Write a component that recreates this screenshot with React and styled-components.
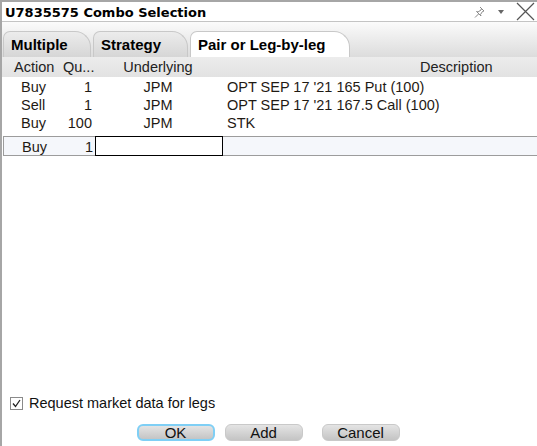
import React from "react";
import styled, { createGlobalStyle } from "styled-components";

const Global = createGlobalStyle`
  html, body { margin: 0; padding: 0; background: #fff; }
  body { font-family: "Liberation Sans", Arial, sans-serif; }
`;

const Window = styled.div`
  width: 537px;
  height: 446px;
  box-sizing: border-box;
  border-top: 2px solid #a6a6a6;
  border-left: 2px solid #a6a6a6;
  display: flex;
  flex-direction: column;
  overflow: hidden;
  background: #fff;
`;

const TitleBar = styled.div`
  height: 19px;
  display: flex;
  align-items: center;
  padding-left: 3px;
  border-bottom: 1px solid #c4c4c4;
`;

const Title = styled.div`
  flex: 1;
  font-family: "DejaVu Sans", Verdana, sans-serif;
  font-weight: bold;
  font-size: 13px;
  color: #000;
  padding-top: 1px;
`;

const TitleIcons = styled.div`
  display: flex;
  align-items: center;
  gap: 12px;
  padding-right: 2px;
`;

const TabStrip = styled.div`
  height: 35px;
  background: linear-gradient(#fbfbfb, #dcdcdc);
  display: flex;
  align-items: flex-end;
  padding-left: 1px;
  gap: 2px;
`;

const Tab = styled.div`
  height: 26px;
  box-sizing: border-box;
  width: ${(p) => p.w}px;
  padding-left: 7px;
  display: flex;
  align-items: center;
  font-weight: bold;
  font-size: 15px;
  color: #000;
  border: 1px solid #c8c8c8;
  border-bottom: none;
  border-radius: 7px 16px 0 0;
  background: ${(p) => (p.active ? "#fff" : "linear-gradient(#ececec, #d6d6d6)")};
`;

const Grid = styled.div`
  display: grid;
  grid-template-columns: 49px 43px 128px 1fr;
  align-items: center;
`;

const Header = styled(Grid)`
  height: 20px;
  background: linear-gradient(#ececec, #e2e2e2);
  font-size: 14.5px;
  color: #222;
`;

const HCell = styled.div`
  padding-left: ${(p) => p.pl || 0}px;
  text-align: ${(p) => p.align || "left"};
  white-space: nowrap;
`;

const Body = styled.div`
  flex: 1;
  padding-top: 1px;
`;

const Row = styled(Grid)`
  height: 18px;
  font-size: 14.5px;
  color: #1f1a14;
`;

const EditRow = styled(Grid)`
  height: 20px;
  margin-top: 4px;
  margin-left: 1px;
  box-sizing: border-box;
  border-top: 1px solid #9c9c9c;
  border-bottom: 1px solid #9c9c9c;
  border-left: 1px solid #9c9c9c;
  background: #f5f7fb;
  font-size: 14.5px;
  color: #1f1a14;
  grid-template-columns: 48px 43px 128px 1fr;
`;

const Cell = styled.div`
  padding-left: ${(p) => p.pl || 0}px;
  padding-right: ${(p) => p.pr || 0}px;
  text-align: ${(p) => p.align || "left"};
  white-space: nowrap;
`;

const EditBox = styled.div`
  height: 20px;
  margin-top: -1px;
  box-sizing: border-box;
  border: 1px solid #000;
  background: #fff;
`;

const Footer = styled.div`
  height: 58px;
  display: flex;
  flex-direction: column;
`;

const CheckLine = styled.label`
  display: flex;
  align-items: center;
  gap: 6px;
  padding-left: 8px;
  height: 22px;
  margin-top: 4px;
  font-size: 14.5px;
  color: #111;
`;

const Box = styled.span`
  width: 11px;
  height: 11px;
  border: 1px solid #8a8a8a;
  display: flex;
  align-items: center;
  justify-content: center;
  background: #fff;
`;

const Buttons = styled.div`
  display: flex;
  justify-content: center;
  margin-top: 10px;
  padding-right: 3px;
`;

const Button = styled.button`
  width: ${(p) => p.w || 78}px;
  height: 17px;
  margin-left: ${(p) => p.ml || 0}px;
  padding: 0;
  box-sizing: border-box;
  font-family: "Liberation Sans", Arial, sans-serif;
  font-size: 15px;
  line-height: 13px;
  color: #111;
  border-radius: 6px;
  background: linear-gradient(#e4e4e4, #c4c4c4);
  border: ${(p) => (p.focus ? "2px solid #7fcff5" : "1px solid #c9c9c9")};
`;

const Pin = () => (
  <svg width="12" height="14" viewBox="0 0 12 14" fill="none" stroke="#888" strokeWidth="1">
    <path d="M6 2 L10 6 L8.5 6.5 L6.5 9.5 L7 11 L2.5 6.5 L4 7 L7 5 L7.5 3.5 Z" />
    <path d="M4.5 9 L1 12.5" />
  </svg>
);

const Close = () => (
  <svg width="19" height="19" viewBox="0 0 19 19" stroke="#555" strokeWidth="1.2">
    <path d="M1 1 L18 18 M18 1 L1 18" />
  </svg>
);

const Caret = styled.span`
  width: 0;
  height: 0;
  border-left: 3px solid transparent;
  border-right: 3px solid transparent;
  border-top: 4px solid #666;
`;

const legs = [
  { action: "Buy", qty: "1", und: "JPM", desc: "OPT SEP 17 '21 165 Put (100)" },
  { action: "Sell", qty: "1", und: "JPM", desc: "OPT SEP 17 '21 167.5 Call (100)" },
  { action: "Buy", qty: "100", und: "JPM", desc: "STK" },
];

export default function App() {
  return (
    <>
      <Global />
      <Window>
        <TitleBar>
          <Title>U7835575 Combo Selection</Title>
          <TitleIcons>
            <Pin />
            <Caret />
            <Close />
          </TitleIcons>
        </TitleBar>
        <TabStrip>
          <Tab w={88}>Multiple</Tab>
          <Tab w={95}>Strategy</Tab>
          <Tab w={160} active>Pair or Leg-by-leg</Tab>
        </TabStrip>
        <Header>
          <HCell pl={12}>Action</HCell>
          <HCell pl={12}>Qu...</HCell>
          <HCell align="center">Underlying</HCell>
          <HCell pl={198}>Description</HCell>
        </Header>
        <Body>
          {legs.map((l, i) => (
            <Row key={i}>
              <Cell pl={19}>{l.action}</Cell>
              <Cell align="right" pr={2}>{l.qty}</Cell>
              <Cell align="center">{l.und}</Cell>
              <Cell pl={5}>{l.desc}</Cell>
            </Row>
          ))}
          <EditRow>
            <Cell pl={18}>Buy</Cell>
            <Cell align="right" pr={2}>1</Cell>
            <EditBox />
            <Cell />
          </EditRow>
        </Body>
        <Footer>
          <CheckLine>
            <Box>
              <svg width="9" height="9" viewBox="0 0 9 9" fill="none" stroke="#222" strokeWidth="1.3">
                <path d="M1 4.5 L3.5 7.5 L8 1" />
              </svg>
            </Box>
            Request market data for legs
          </CheckLine>
          <Buttons>
            <Button focus>OK</Button>
            <Button ml={10}>Add</Button>
            <Button ml={19}>Cancel</Button>
          </Buttons>
        </Footer>
      </Window>
    </>
  );
}
